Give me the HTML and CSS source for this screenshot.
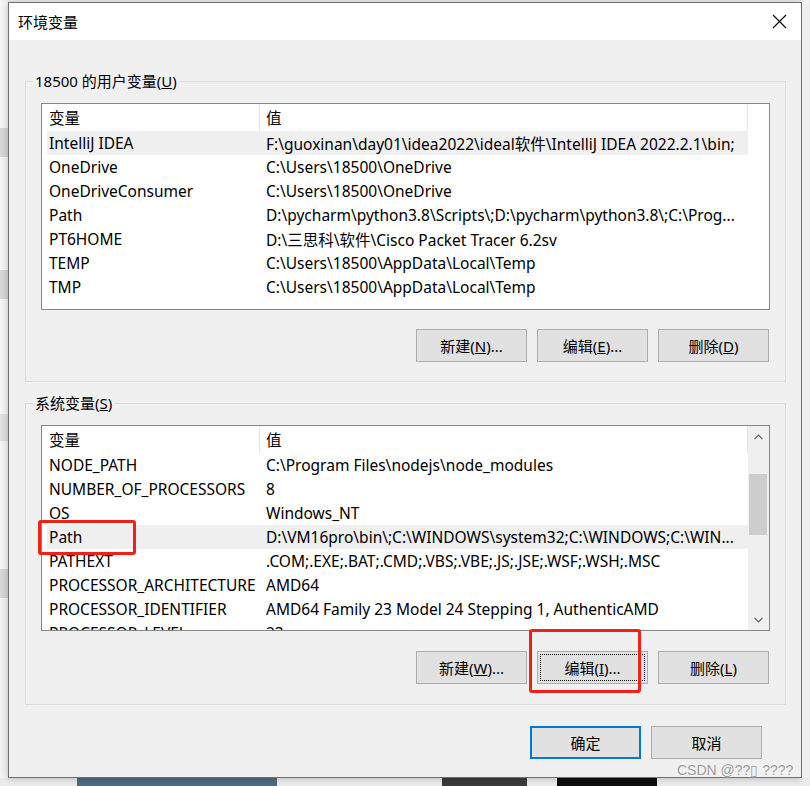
FILE: index.html
```html
<!DOCTYPE html>
<html lang="zh-CN">
<head>
    <meta charset="UTF-8">
    <meta name="viewport" content="width=device-width, initial-scale=1.0">
    <title>环境变量</title>
    <link rel="stylesheet" href="styles.css">
</head>
<body>
    <div class="desktop">
        <div class="side side-left">
            <div class="blk blk-a"></div>
            <div class="blk blk-gray"></div>
            <div class="blk blk-b"></div>
            <div class="blk blk-gray"></div>
            <div class="blk blk-c"></div>
            <div class="blk blk-gray blk-thin"></div>
            <div class="blk blk-d"></div>
            <div class="blk blk-gray"></div>
        </div>

        <div class="window">
            <div class="titlebar">
                <span class="title">环境变量</span>
                <svg class="close" width="15" height="15" viewBox="0 0 15 15">
                    <path d="M1 1 L14 14 M14 1 L1 14" stroke="#000" stroke-width="1.1" fill="none"/>
                </svg>
            </div>

            <div class="dialog">
                <fieldset class="group">
                    <legend>18500 的用户变量(<u>U</u>)</legend>
                    <div class="listview">
                        <div class="lv-main">
                            <div class="lv-head">
                                <div class="col col-name">变量</div>
                                <div class="col col-value">值</div>
                            </div>
                            <div class="lv-row sel"><div class="cell">IntelliJ IDEA</div><div class="cell">F:\guoxinan\day01\idea2022\ideal软件\IntelliJ IDEA 2022.2.1\bin;</div></div>
                            <div class="lv-row"><div class="cell">OneDrive</div><div class="cell">C:\Users\18500\OneDrive</div></div>
                            <div class="lv-row"><div class="cell">OneDriveConsumer</div><div class="cell">C:\Users\18500\OneDrive</div></div>
                            <div class="lv-row"><div class="cell">Path</div><div class="cell">D:\pycharm\python3.8\Scripts\;D:\pycharm\python3.8\;C:\Prog...</div></div>
                            <div class="lv-row"><div class="cell">PT6HOME</div><div class="cell">D:\三思科\软件\Cisco Packet Tracer 6.2sv</div></div>
                            <div class="lv-row"><div class="cell">TEMP</div><div class="cell">C:\Users\18500\AppData\Local\Temp</div></div>
                            <div class="lv-row"><div class="cell">TMP</div><div class="cell">C:\Users\18500\AppData\Local\Temp</div></div>
                        </div>
                    </div>
                    <div class="btn-row">
                        <button class="btn">新建(<u>N</u>)...</button>
                        <button class="btn">编辑(<u>E</u>)...</button>
                        <button class="btn">删除(<u>D</u>)</button>
                    </div>
                </fieldset>

                <fieldset class="group group-sys">
                    <legend>系统变量(<u>S</u>)</legend>
                    <div class="listview listview-sys">
                        <div class="lv-main">
                            <div class="lv-head">
                                <div class="col col-name">变量</div>
                                <div class="col col-value">值</div>
                            </div>
                            <div class="lv-row"><div class="cell">NODE_PATH</div><div class="cell">C:\Program Files\nodejs\node_modules</div></div>
                            <div class="lv-row"><div class="cell">NUMBER_OF_PROCESSORS</div><div class="cell">8</div></div>
                            <div class="lv-row"><div class="cell">OS</div><div class="cell">Windows_NT</div></div>
                            <div class="lv-row sel"><div class="cell">Path</div><div class="cell">D:\VM16pro\bin\;C:\WINDOWS\system32;C:\WINDOWS;C:\WIN...</div></div>
                            <div class="lv-row"><div class="cell">PATHEXT</div><div class="cell">.COM;.EXE;.BAT;.CMD;.VBS;.VBE;.JS;.JSE;.WSF;.WSH;.MSC</div></div>
                            <div class="lv-row"><div class="cell">PROCESSOR_ARCHITECTURE</div><div class="cell">AMD64</div></div>
                            <div class="lv-row"><div class="cell">PROCESSOR_IDENTIFIER</div><div class="cell">AMD64 Family 23 Model 24 Stepping 1, AuthenticAMD</div></div>
                            <div class="lv-row"><div class="cell">PROCESSOR_LEVEL</div><div class="cell">23</div></div>
                        </div>
                        <div class="scrollbar">
                            <div class="sb-arrow">
                                <svg width="9" height="6" viewBox="0 0 9 6"><path d="M0.5 5.2 L4.5 1.2 L8.5 5.2" stroke="#606060" stroke-width="1.2" fill="none"/></svg>
                            </div>
                            <div class="sb-track"><div class="sb-thumb"></div></div>
                            <div class="sb-arrow">
                                <svg width="9" height="6" viewBox="0 0 9 6"><path d="M0.5 0.8 L4.5 4.8 L8.5 0.8" stroke="#606060" stroke-width="1.2" fill="none"/></svg>
                            </div>
                        </div>
                    </div>
                    <div class="btn-row">
                        <button class="btn">新建(<u>W</u>)...</button>
                        <button class="btn focus">编辑(<u>I</u>)...</button>
                        <button class="btn">删除(<u>L</u>)</button>
                    </div>
                </fieldset>

                <div class="footer">
                    <button class="btn btn-default">确定</button>
                    <button class="btn">取消</button>
                </div>
            </div>
        </div>

        <div class="side side-right"></div>

        <div class="mark mark-path"></div>
        <div class="mark mark-edit"></div>
        <div class="watermark">CSDN @??&#9647; ????</div>
    </div>

    <div class="taskstrip">
        <div class="ts ts-light" style="width:77px"></div>
        <div class="ts ts-blue" style="width:200px"></div>
        <div class="ts ts-light" style="width:165px"></div>
        <div class="ts ts-dark" style="width:85px"></div>
        <div class="ts ts-light" style="width:30px"></div>
        <div class="ts ts-black" style="width:100px"></div>
        <div class="ts ts-light ts-rest"></div>
    </div>
</body>
</html>
```

FILE: styles.css
```css
* {
    box-sizing: border-box;
}
body {
    margin: 0;
    background: #f4f4f4;
    font-family: "Noto Sans", "Noto Sans CJK SC", sans-serif;
    font-size: 15px;
    color: #000;
    overflow: hidden;
}
.desktop {
    position: relative;
    display: flex;
    padding-top: 2px;
    height: 778px;
}

/* bits of other windows around the dialog */
.side {
    width: 8px;
    flex: none;
    display: flex;
    flex-direction: column;
}
.side-right {
    background: #efefef;
}
.blk-a { height: 126px; background: #f7f7f7; }
.blk-b { height: 113px; background: #f7f7f7; }
.blk-c { height: 115px; background: #f7f7f7; }
.blk-d { height: 128px; background: #f7f7f7; }
.blk-gray { height: 29px; background: #d9d9d9; }
.blk-thin { height: 27px; background: #e2e2e2; }

.window {
    width: 794px;
    height: 776px;
    flex: none;
    border: 1px solid #6f6f6f;
    background: #f0f0f0;
    display: flex;
    flex-direction: column;
    box-shadow: 0 0 8px rgba(0,0,0,0.25);
}
.titlebar {
    height: 37px;
    flex: none;
    background: #fff;
    display: flex;
    align-items: center;
    justify-content: space-between;
    padding: 0 14px 0 9px;
}
.dialog {
    flex: 1;
    padding: 31px 15px 0 16px;
}

.group {
    margin: 0;
    min-width: 0;
    border: 1px solid #dcdcdc;
    padding: 12px 15px 19px 15px;
}
.group + .group {
    margin-top: 11px;
}
.group legend {
    padding: 0 2px;
    margin-left: -8px;
    line-height: 20px;
}
.group-sys {
    padding-bottom: 20px;
}

.listview {
    height: 207px;
    border: 1px solid #828790;
    background: #fff;
    display: flex;
    overflow: hidden;
    font-size: 15.5px;
}
.listview-sys {
    height: 206px;
}
.lv-main {
    width: 706px;
    flex: none;
}
.lv-head {
    display: flex;
    height: 27px;
    border-right: 1px solid #e5e5e5;
}
.lv-head .col {
    display: flex;
    align-items: center;
    padding-left: 7px;
}
.col-name {
    width: 218px;
    border-right: 1px solid #e5e5e5;
}
.lv-head .col-value {
    flex: 1;
    padding-left: 6px;
}
.lv-row {
    display: flex;
    align-items: center;
    height: 24px;
    width: 701px;
    margin-left: 5px;
}
.lv-row.sel {
    background: #efefef;
}
.lv-row .cell {
    white-space: nowrap;
    overflow: hidden;
    text-overflow: ellipsis;
}
.lv-row .cell:first-child {
    width: 213px;
    flex: none;
    padding-left: 2px;
}
.lv-row .cell:last-child {
    flex: 1;
    padding-left: 6px;
}

.scrollbar {
    width: 21px;
    flex: none;
    display: flex;
    flex-direction: column;
    background: #f0f0f0;
}
.sb-arrow {
    height: 21px;
    display: flex;
    align-items: center;
    justify-content: center;
}
.sb-track {
    flex: 1;
    padding: 27px 2px 0 1px;
}
.sb-thumb {
    height: 61px;
    background: #cdcdcd;
}

.btn-row {
    display: flex;
    justify-content: flex-end;
    gap: 10px;
    margin-top: 19px;
    padding-right: 1px;
}
.group-sys .btn-row {
    margin-top: 20px;
}
.btn {
    width: 111px;
    height: 33px;
    padding: 0;
    background: #e1e1e1;
    border: 1px solid #adadad;
    font-family: inherit;
    font-size: 15px;
    color: #000;
}
.btn.focus {
    outline: 1px dotted #000;
    outline-offset: -4px;
}
.btn-default {
    border: 2px solid #0078d7;
}
.footer {
    display: flex;
    justify-content: flex-end;
    gap: 10px;
    margin-top: 21px;
    padding-right: 24px;
}

/* red annotation frames drawn over the screenshot */
.mark {
    position: absolute;
    border: 3px solid #f2201a;
    border-radius: 3px;
}
.mark-path {
    left: 38px;
    top: 520px;
    width: 98px;
    height: 35px;
}
.mark-edit {
    left: 529px;
    top: 629px;
    width: 112px;
    height: 64px;
}
.watermark {
    position: absolute;
    left: 677px;
    top: 762px;
    font-family: "Liberation Sans", Arial, sans-serif;
    font-size: 14px;
    color: #9c9c9c;
    text-shadow: 0 0 2px #fff;
    white-space: nowrap;
}

.taskstrip {
    display: flex;
    height: 8px;
}
.ts {
    flex: none;
    height: 8px;
}
.ts-light { background: #ececec; }
.ts-blue { background: #4c6c82; }
.ts-dark { background: #3b3b3b; }
.ts-black { background: #0d0d0d; }
.ts-rest { flex: 1; }
```
